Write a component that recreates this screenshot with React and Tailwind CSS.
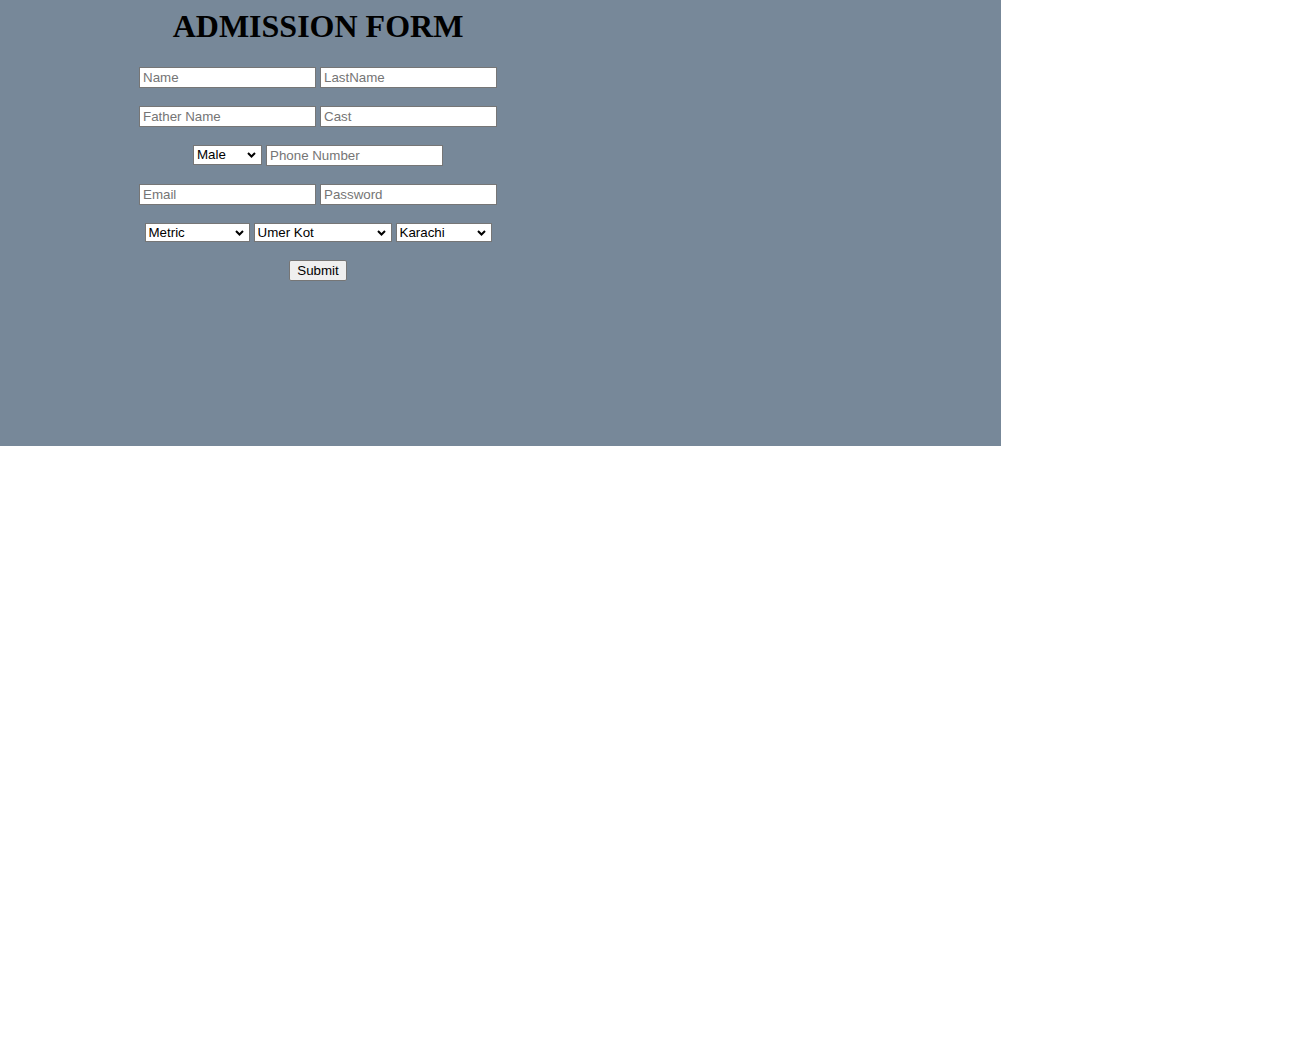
import React from "react";

const font = { fontFamily: '"Liberation Sans", Arial, sans-serif' };

function Input({ placeholder, type = "text" }) {
  return (
    <input
      type={type}
      placeholder={placeholder}
      className="box-border block w-[177px] h-[21px] border border-[#767676] bg-white px-[3px] text-[13.33px] text-black placeholder:text-[#757575] outline-none font-['Liberation_Sans',Arial,sans-serif]"
    />
  );
}

function Select({ w, value, options, h = "h-[19px]" }) {
  return (
    <span className={`relative block ${w} ${h}`}>
      <select
        defaultValue={value}
        className={`box-border block appearance-none ${w} ${h} border border-[#767676] bg-white pl-[3px] pr-[16px] py-0 text-[13.33px] leading-[16px] text-black outline-none font-['Liberation_Sans',Arial,sans-serif]`}
      >
        {options.map((o) => (
          <option key={o}>{o}</option>
        ))}
      </select>
      <svg
        className="pointer-events-none absolute right-[6px] top-1/2 -translate-y-1/2"
        width="9"
        height="6"
        viewBox="0 0 9 6"
      >
        <path d="M1 1 L4.5 4.5 L8 1" fill="none" stroke="#000" strokeWidth="2" />
      </svg>
    </span>
  );
}

export default function App() {
  return (
    <div className="w-[1001px] h-[446px] bg-[#778899]" style={font}>
      <div className="w-[636px] flex flex-col items-center">
        <h1 className="mt-[8px] leading-[37px] text-[32px] font-bold text-black font-['Liberation_Serif','Times_New_Roman',serif]">
          ADMISSION FORM
        </h1>
        <div className="mt-[22px] flex gap-[4px]">
          <Input placeholder="Name" />
          <Input placeholder="LastName" />
        </div>
        <div className="mt-[18px] flex gap-[4px]">
          <Input placeholder="Father Name" />
          <Input placeholder="Cast" />
        </div>
        <div className="mt-[18px] flex gap-[4px] items-start">
          <Select w="w-[69px]" h="h-[20px]" value="Male" options={["Male", "Female"]} />
          <Input placeholder="Phone Number" />
        </div>
        <div className="mt-[18px] flex gap-[4px]">
          <Input placeholder="Email" />
          <Input placeholder="Password" type="password" />
        </div>
        <div className="mt-[18px] flex gap-[4px]">
          <Select w="w-[105px]" value="Metric" options={["Metric", "Intermediate", "Graduation"]} />
          <Select w="w-[138px]" value="Umer Kot" options={["Umer Kot", "Hyderabad", "Mirpurkhas"]} />
          <Select w="w-[96px]" value="Karachi" options={["Karachi", "Lahore", "Islamabad"]} />
        </div>
        <button className="mt-[18px] box-border w-[58px] h-[21px] rounded-[2px] border border-[#767676] bg-[#efefef] text-[13.33px] leading-[16px] text-black font-['Liberation_Sans',Arial,sans-serif]">
          Submit
        </button>
      </div>
    </div>
  );
}
